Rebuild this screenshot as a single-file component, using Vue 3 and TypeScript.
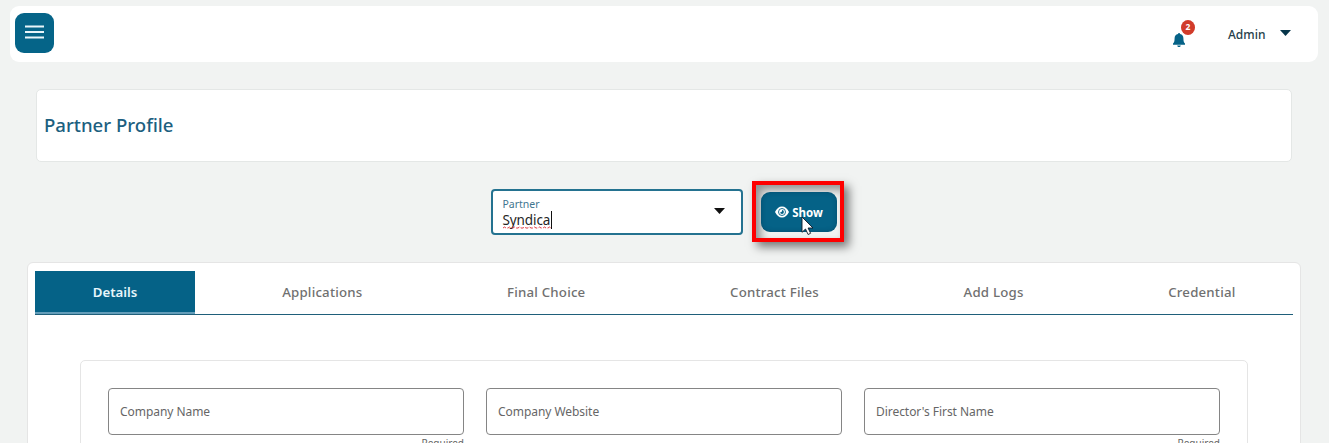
<script setup lang="ts">
import { ref } from 'vue'

interface Field {
  label: string
  required: boolean
}

const tabs: string[] = ['Details', 'Applications', 'Final Choice', 'Contract Files', 'Add Logs', 'Credential']
const activeTab = ref<string>('Details')
const partner = ref<string>('Syndica')
const notifications = ref<number>(2)
const fields: Field[] = [
  { label: 'Company Name', required: true },
  { label: 'Company Website', required: false },
  { label: "Director's First Name", required: true },
]
</script>

<template>
  <div class="page">
    <header class="topbar">
      <button class="menu" aria-label="Menu">
        <svg width="19" height="16" viewBox="0 0 19 16">
          <path d="M0 2.500h19M0 8h19M0 13.500h19" stroke="#e9f5fa" stroke-width="2.100" />
        </svg>
      </button>
      <div class="account">
        <div class="bell">
          <svg width="12" height="14" viewBox="0 0 12 14">
            <path d="M6 0c.6 0 1 .4 1 .9C9.300 1.400 10.400 3 10.400 5.200c0 3 .5 4.300 1.600 5.400v1.200H0v-1.200c1.100-1.100 1.600-2.400 1.600-5.400C1.600 3 2.700 1.400 5 .9 5 .4 5.400 0 6 0ZM4.200 12.500h3.600C7.600 13.500 6.900 14 6 14s-1.600-.5-1.800-1.500Z" fill="#056287" />
          </svg>
          <span class="badge">{{ notifications }}</span>
        </div>
        <span class="user">Admin</span>
        <svg class="user-caret" width="11" height="6" viewBox="0 0 11 6"><path d="M0 0h11L5.500 6Z" fill="#07364a" /></svg>
      </div>
    </header>

    <section class="title-card"><h1>Partner Profile</h1></section>

    <div class="search">
      <div class="select">
        <div class="select-text">
          <label>Partner</label>
          <div class="value"><span>{{ partner }}</span>
            <svg class="squiggle" width="48" height="3" viewBox="0 0 48 3"><path d="M0 2l1.500-1L3 2h2l1.500-1L8 2h2l1.500-1L13 2h2l1.500-1L18 2h2l1.500-1L23 2h2l1.500-1L28 2h2l1.500-1L33 2h2l1.500-1L38 2h2l1.500-1L43 2h2l1.500-1L48 2" fill="none" stroke="#e23b42" stroke-dasharray="3.500 1.500" /></svg>
          </div>
        </div>
        <svg class="caret" width="11" height="6" viewBox="0 0 11 6"><path d="M0 0h11L5.500 6Z" fill="#111" /></svg>
      </div>
      <div class="highlight">
        <button class="show">
          <svg width="14" height="12" viewBox="0 0 14 12">
            <path d="M0 6C1.600 2.500 4 .5 7 .5S12.400 2.500 14 6c-1.600 3.500-4 5.500-7 5.500S1.600 9.500 0 6Z" fill="#fff" />
            <circle cx="7" cy="6" r="3.500" fill="none" stroke="#056287" stroke-width=".9" />
            <path d="M7 4.100A1.900 1.900 0 1 1 5.100 6c.3.200.6.200.8.200A1.200 1.200 0 0 0 7 5c0-.4 0-.6 0-.9Z" fill="#056287" />
          </svg>
          <span>Show</span>
        </button>
        <svg class="pointer" width="13" height="20" viewBox="0 0 13 20">
          <path d="M1 1v15.300l3.500-3.300 2.600 5.500 2.500-1.200L7.100 12H12Z" fill="#fff" stroke="#111827" stroke-width=".9" />
        </svg>
      </div>
    </div>

    <main class="panel">
      <nav class="tabs">
        <button v-for="tab in tabs" :key="tab" class="tab" :class="{ active: tab === activeTab }" @click="activeTab = tab">{{ tab }}</button>
      </nav>
      <form class="form" @submit.prevent>
        <div v-for="field in fields" :key="field.label" class="field">
          <div class="input">{{ field.label }}</div>
          <div v-if="field.required" class="hint">Required</div>
        </div>
      </form>
    </main>
  </div>
</template>

<style>
body { margin: 0; overflow: hidden; background: #f1f3f2; }
</style>

<style scoped>
* { box-sizing: border-box; }
.page { height: 443px; overflow: hidden; padding-top: 6px; background: #f1f3f2; font-family: "Noto Sans", "Open Sans", sans-serif; color: #666; }
button { border: 0; padding: 0; font-family: inherit; }
svg { display: block; flex: none; }
.topbar { display: flex; align-items: flex-start; justify-content: space-between; height: 56px; margin: 0 11px 0 10px; padding: 7px 27px 0 5px; border-radius: 9px; background: #fff; }
.menu { display: flex; align-items: center; justify-content: center; width: 39px; height: 40px; border-radius: 9px; background: #056488; padding-bottom: 2px; }
.account { display: flex; align-items: flex-start; }
.bell { position: relative; padding-top: 20px; margin-right: 43px; }
.badge { position: absolute; left: 8px; top: 7px; width: 14px; height: 15px; border-radius: 50%; background: #d13b2a; color: #fff; font-size: 8.500px; font-weight: 700; line-height: 14px; text-align: center; }
.user { width: 38px; margin-top: 13px; font-size: 12px; line-height: 18px; color: #263e4a; font-weight: 500; }
.user-caret { margin: 17px 0 0 14px; }
.title-card { display: flex; align-items: center; height: 73px; margin: 27px 37px 0 36px; padding: 0 0 1px 7px; border: 1px solid #e4e7e6; border-radius: 5px; background: #fff; }
h1 { margin: 0; font-size: 18.600px; font-weight: 500; line-height: 24px; color: #1c6080; }
.search { display: flex; align-items: flex-start; height: 100px; padding: 19px 0 0 491px; }
.select { display: flex; justify-content: space-between; width: 252px; height: 46px; margin-top: 8px; padding: 5px 16px 0 9.500px; border: 2px solid #247290; border-radius: 4px; background: #fff; }
.select label { display: block; font-size: 10.500px; line-height: 16px; color: #3f7690; }
.value { position: relative; width: 49px; height: 18px; border-right: 1px solid #111; font-size: 13.500px; line-height: 18px; color: #252525; letter-spacing: -.1px; margin-top: -1px; }
.squiggle { position: absolute; left: 0; top: 15px; }
.caret { margin-top: 12px; }
.highlight { position: relative; width: 92px; height: 61px; margin-left: 9px; padding: 7px 0 0 5px; border: 4px solid #fe0000; box-shadow: 5px 5px 9px rgba(0,0,0,.5), inset 5px 5px 9px rgba(0,0,0,.4); }
.show { display: flex; align-items: center; justify-content: center; gap: 3px; width: 76px; height: 40px; border-radius: 9px; background: #056287; color: #fff; font-size: 11.500px; font-weight: 700; box-shadow: inset 0 0 5px rgba(0,30,50,.3); }
.pointer { position: absolute; left: 45px; top: 31px; }
.panel { height: 220px; margin: 0 28px 0 27px; padding: 8px 7px; border: 1px solid #e5e5e5; border-radius: 6px; background: #fff; }
.tabs { display: flex; justify-content: space-between; height: 44px; border-bottom: 1px solid #1f5f7a; }
.tab { height: 43px; padding: 0 57.500px 2px; background: transparent; color: #707070; font-size: 13.250px; font-weight: 500; letter-spacing: .2px; white-space: nowrap; }
.tab.active { width: 160px; padding: 0; border-bottom: 2px solid #639db9; background: #056287; color: #e8f6fb; font-weight: 600; letter-spacing: 0; }
.form { display: grid; grid-template-columns: repeat(3, 356px); gap: 22px; height: 130px; margin: 45px 45px 0; padding: 27px; border: 1px solid #e5e5e5; border-radius: 5px; }
.input { height: 47px; padding-left: 11px; border: 1px solid #858585; border-radius: 4px; font-size: 12px; line-height: 45px; letter-spacing: -.05px; }
.hint { margin-top: 1px; text-align: right; font-size: 10px; line-height: 14px; }
</style>
